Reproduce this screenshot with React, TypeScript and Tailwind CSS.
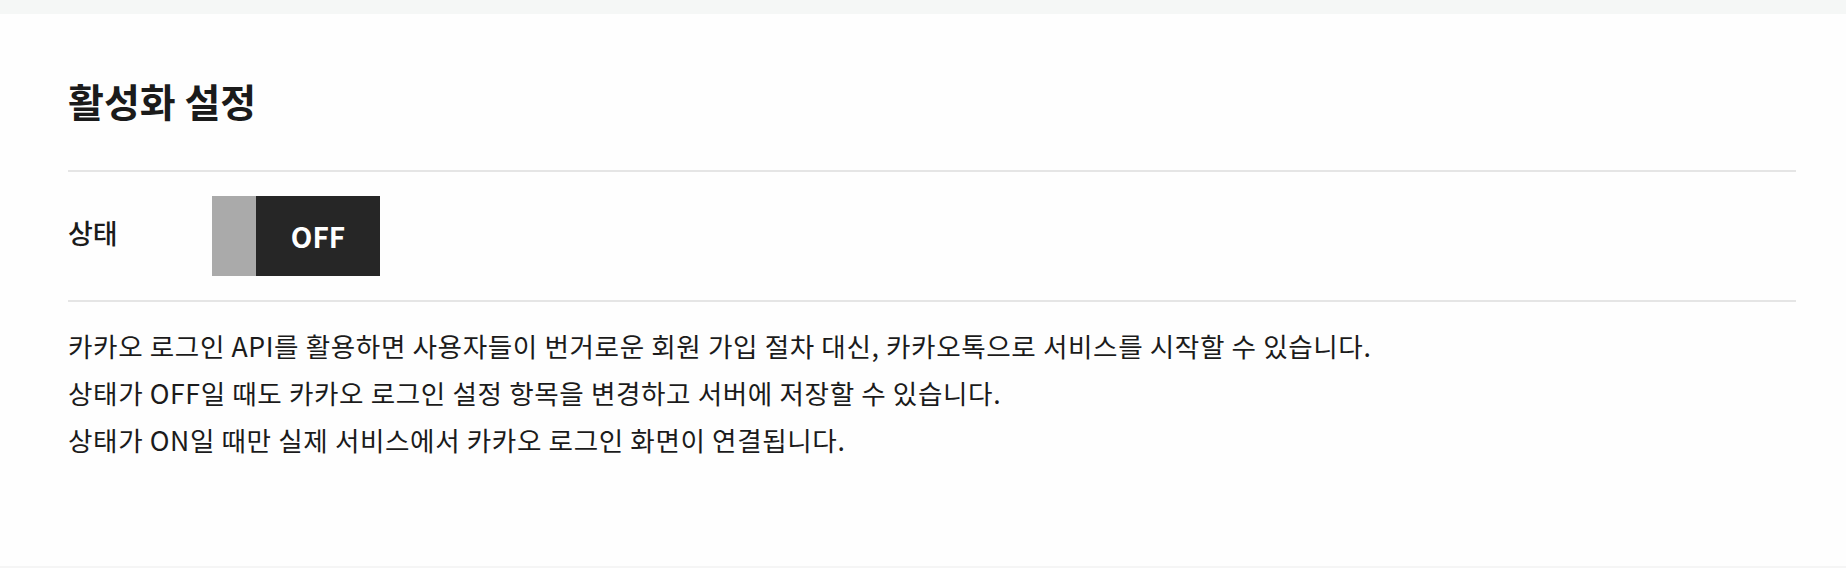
import { useState } from "react";

export default function App() {
    const [active, setActive] = useState(false);

    return (
        <div className="flex h-[568px] flex-col bg-[#fefefe] font-['Noto_Sans_CJK_KR','Noto_Sans',sans-serif] text-[#1b1b1b]">
            <div className="h-[14px] bg-[#f5f7f6]"></div>
            <section className="pl-[68px] pr-[50px]">
                <h2 className="pt-[62px] pb-[46px] text-[39px] font-bold leading-[48px]">
                    활성화 설정
                </h2>
                <div className="h-[2px] bg-[#e5e5e5]"></div>
                <div className="flex h-[128px] items-center">
                    <span className="w-[144px] pb-[6px] text-[27px] font-medium">상태</span>
                    {/* toggle switch, OFF state */}
                    <button
                        onClick={() => setActive(!active)}
                        className="flex h-[80px] cursor-pointer"
                    >
                        <span className="w-[44px] bg-[#aaaaaa]"></span>
                        <span className="flex w-[124px] items-center justify-center bg-[#262626] text-[28px] font-bold text-white">
                            {active ? "ON" : "OFF"}
                        </span>
                    </button>
                </div>
                <div className="h-[2px] bg-[#e5e5e5]"></div>
                <div className="pt-[20px] text-[26.6px] leading-[47px] tracking-[0.6px]">
                    <p>카카오 로그인 API를 활용하면 사용자들이 번거로운 회원 가입 절차 대신, 카카오톡으로 서비스를 시작할 수 있습니다.</p>
                    <p>상태가 OFF일 때도 카카오 로그인 설정 항목을 변경하고 서버에 저장할 수 있습니다.</p>
                    <p>상태가 ON일 때만 실제 서비스에서 카카오 로그인 화면이 연결됩니다.</p>
                </div>
            </section>
            <div className="mt-auto h-[2px] bg-[#f5f5f5]"></div>
        </div>
    );
}
